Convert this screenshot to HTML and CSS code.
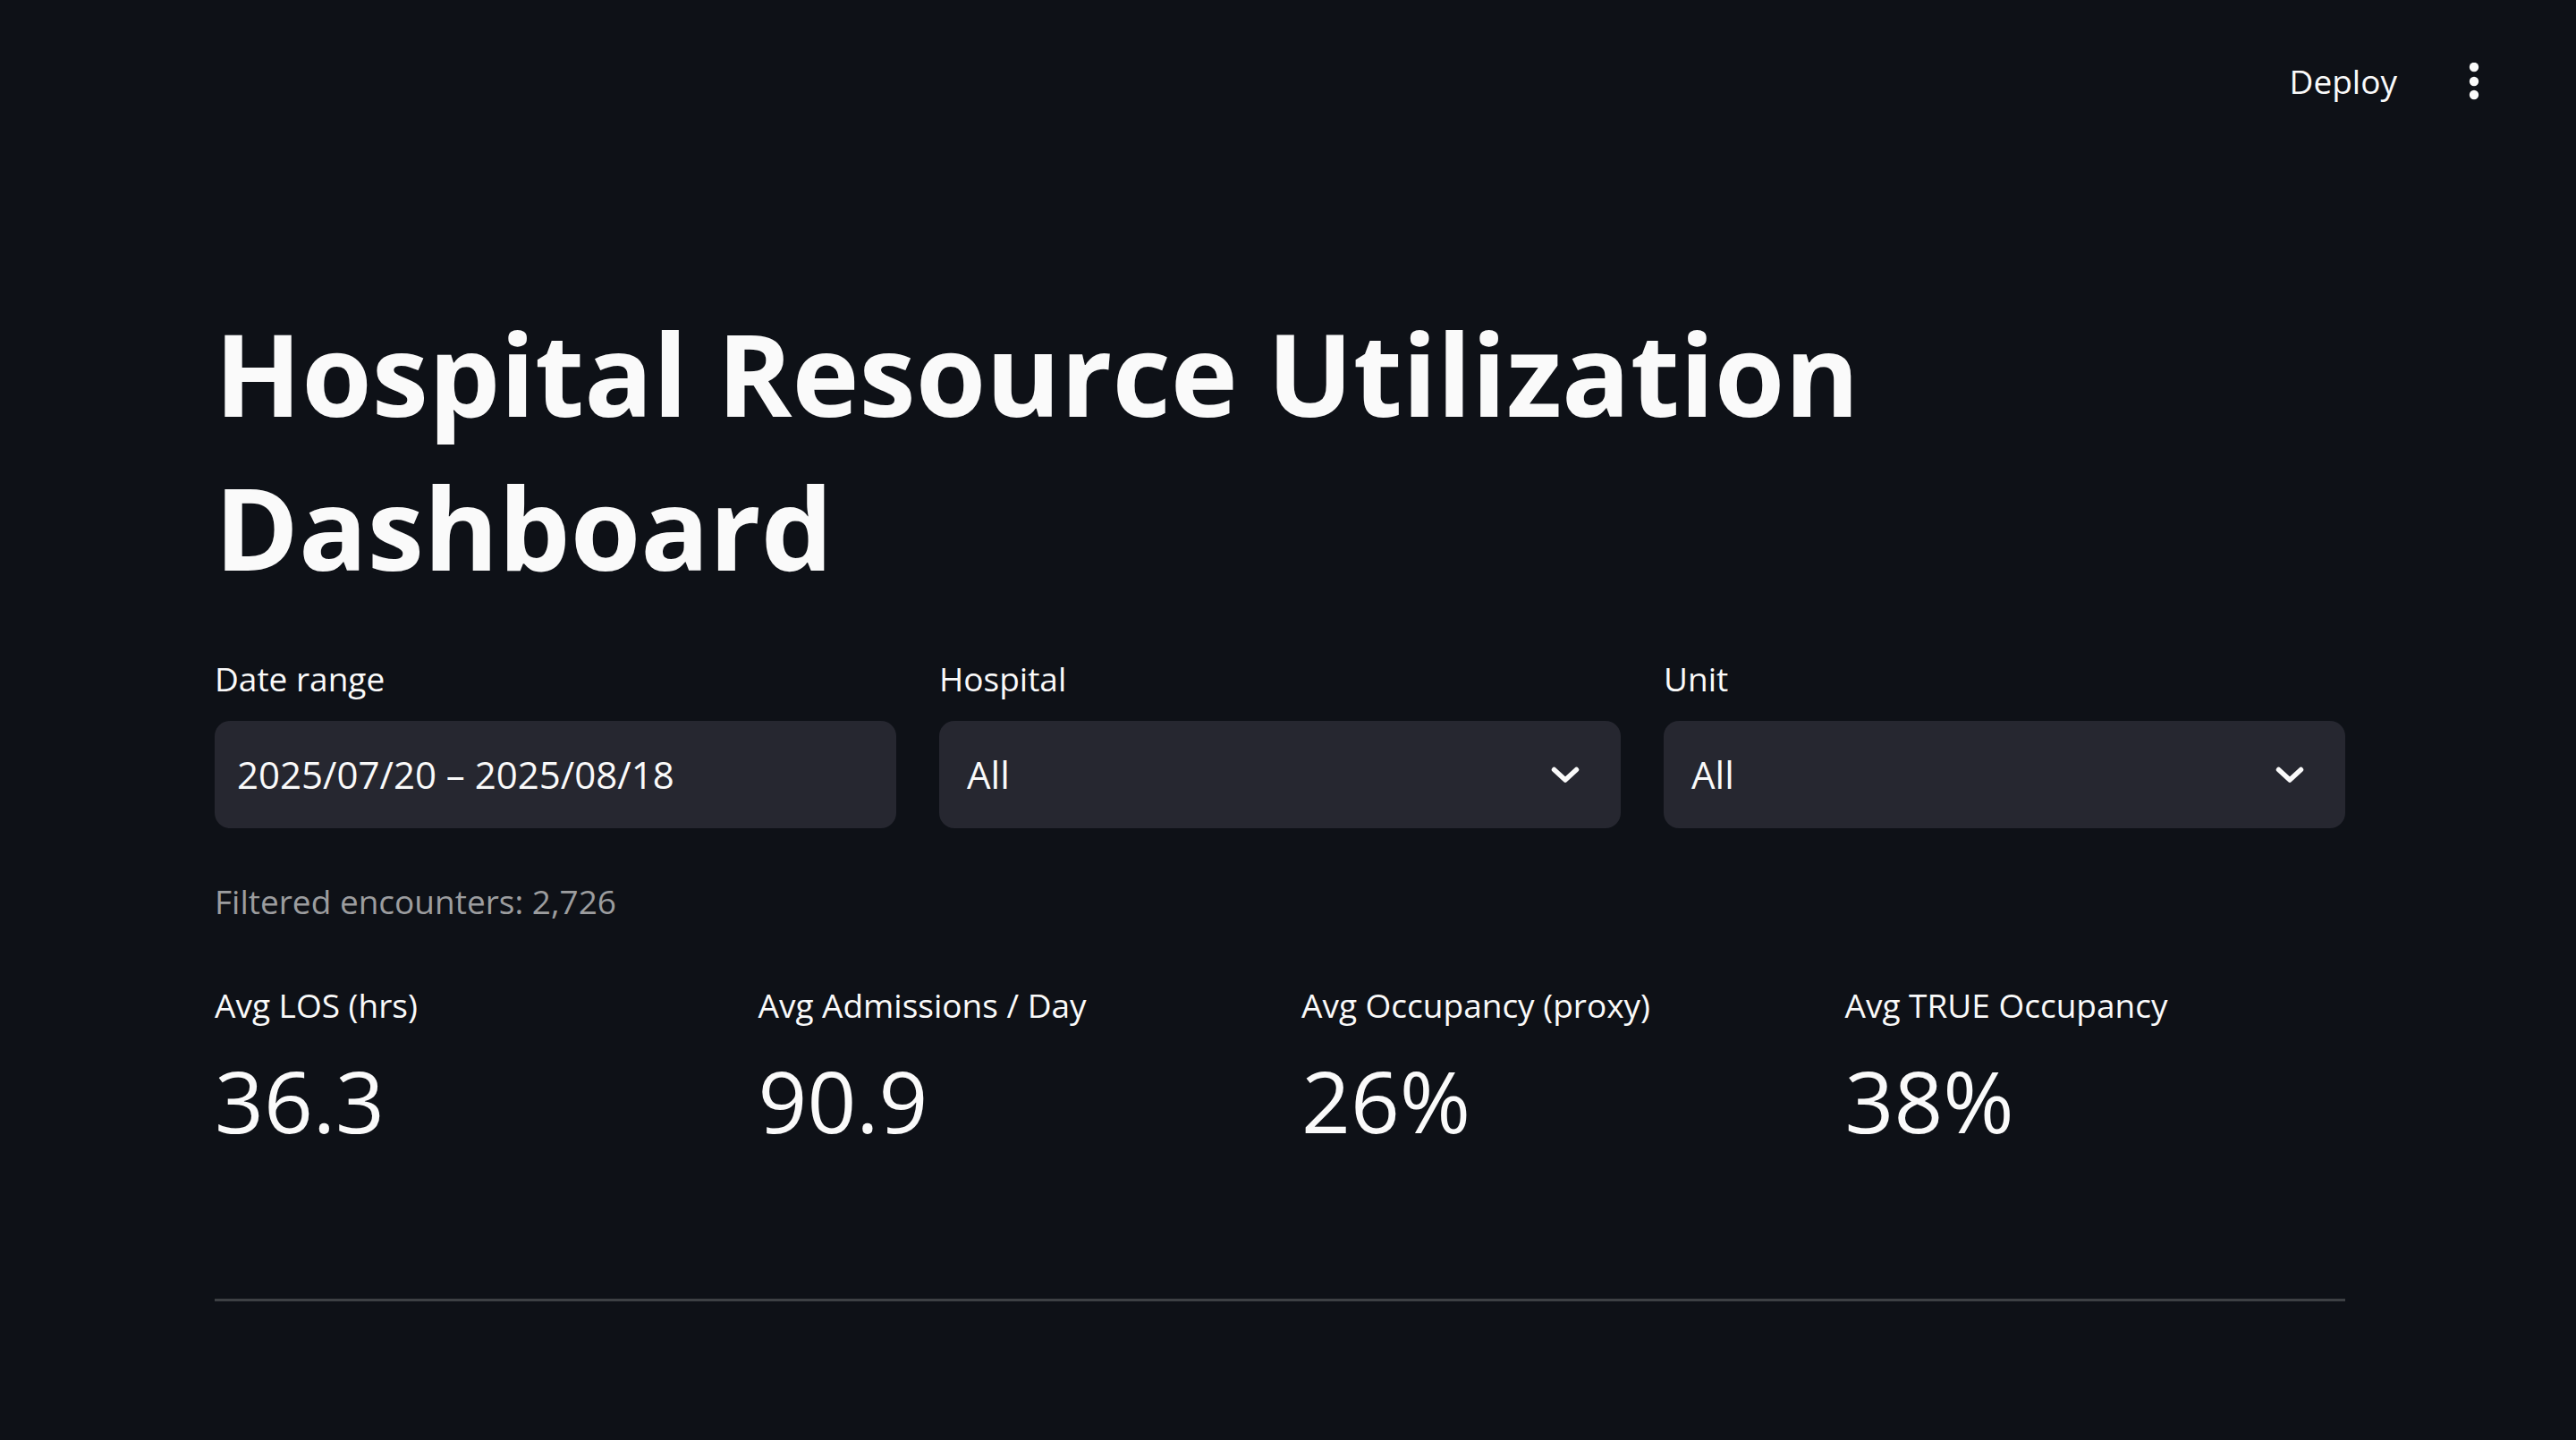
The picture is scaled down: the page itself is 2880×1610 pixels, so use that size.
FILE: index.html
```html
<!DOCTYPE html>
<html lang="en">
<head>
<meta charset="utf-8">
<title>Hospital Resource Utilization Dashboard</title>
<link rel="stylesheet" href="styles.css">
</head>
<body>
<header class="app-header">
  <span class="deploy">Deploy</span>
  <svg class="kebab" width="12" height="42" viewBox="0 0 12 42" aria-hidden="true">
    <circle cx="6" cy="5" r="5.2"/>
    <circle cx="6" cy="21" r="5.2"/>
    <circle cx="6" cy="36" r="5.2"/>
  </svg>
</header>
<main class="main">
  <h1 class="title">Hospital Resource Utilization Dashboard</h1>

  <section class="filters">
    <div class="field">
      <label class="label">Date range</label>
      <div class="input date-input">2025/07/20 – 2025/08/18</div>
    </div>
    <div class="field">
      <label class="label">Hospital</label>
      <div class="input select-input">
        <span>All</span>
        <svg class="chevron" width="32" height="18" viewBox="0 0 32 18" aria-hidden="true"><path d="M3.5 3.5 L16 15 L28.5 3.5"/></svg>
      </div>
    </div>
    <div class="field">
      <label class="label">Unit</label>
      <div class="input select-input">
        <span>All</span>
        <svg class="chevron" width="32" height="18" viewBox="0 0 32 18" aria-hidden="true"><path d="M3.5 3.5 L16 15 L28.5 3.5"/></svg>
      </div>
    </div>
  </section>

  <p class="caption">Filtered encounters: 2,726</p>

  <section class="metrics">
    <div class="metric"><div class="metric-label">Avg LOS (hrs)</div><div class="metric-value">36.3</div></div>
    <div class="metric"><div class="metric-label">Avg Admissions / Day</div><div class="metric-value">90.9</div></div>
    <div class="metric"><div class="metric-label">Avg Occupancy (proxy)</div><div class="metric-value">26%</div></div>
    <div class="metric"><div class="metric-label">Avg TRUE Occupancy</div><div class="metric-value">38%</div></div>
  </section>

  <hr class="divider">
</main>
</body>
</html>
```
FILE: styles.css
```css
html, body {
  margin: 0;
  padding: 0;
  background: #0e1117;
  color: #fafafa;
  font-family: "Open Sans", "Noto Sans", sans-serif;
}

.app-header {
  height: 181px;
  display: flex;
  align-items: center;
  justify-content: flex-end;
  padding-right: 108px;
  gap: 80px;
}

.deploy {
  font-size: 37px;
  line-height: 50px;
  color: #fafafa;
}

.kebab circle {
  fill: #fafafa;
}

.main {
  width: 2382px;
  margin-left: 240px;
  padding-top: 150px;
}

.title {
  margin: 0;
  font-size: 127px;
  line-height: 172px;
  font-weight: 700;
  letter-spacing: 0;
}

.filters {
  display: grid;
  grid-template-columns: repeat(3, 1fr);
  gap: 48px;
  margin-top: 59px;
}

.field {
  display: flex;
  flex-direction: column;
}

.label {
  font-size: 37px;
  line-height: 50px;
  margin-bottom: 22px;
}

.input {
  height: 120px;
  background: #262730;
  border-radius: 17px;
  display: flex;
  align-items: center;
  font-size: 42px;
  line-height: 1;
  box-sizing: border-box;
}

.date-input {
  padding-left: 25px;
}

.select-input {
  padding-left: 31px;
  padding-right: 46px;
  justify-content: space-between;
}

.chevron path {
  fill: none;
  stroke: #fafafa;
  stroke-width: 5.5;
  stroke-linecap: round;
  stroke-linejoin: round;
}

.caption {
  margin: 57px 0 0;
  font-size: 37px;
  line-height: 50px;
  color: #9c9d9f;
}

.metrics {
  display: grid;
  grid-template-columns: repeat(4, 1fr);
  gap: 48px;
  margin-top: 66px;
}

.metric-label {
  font-size: 37px;
  line-height: 50px;
}

.metric-value {
  font-size: 96px;
  line-height: 120px;
  margin-top: 21px;
}

.divider {
  margin: 162px 0 0;
  border: 0;
  height: 3px;
  background: #3d4044;
}
```
